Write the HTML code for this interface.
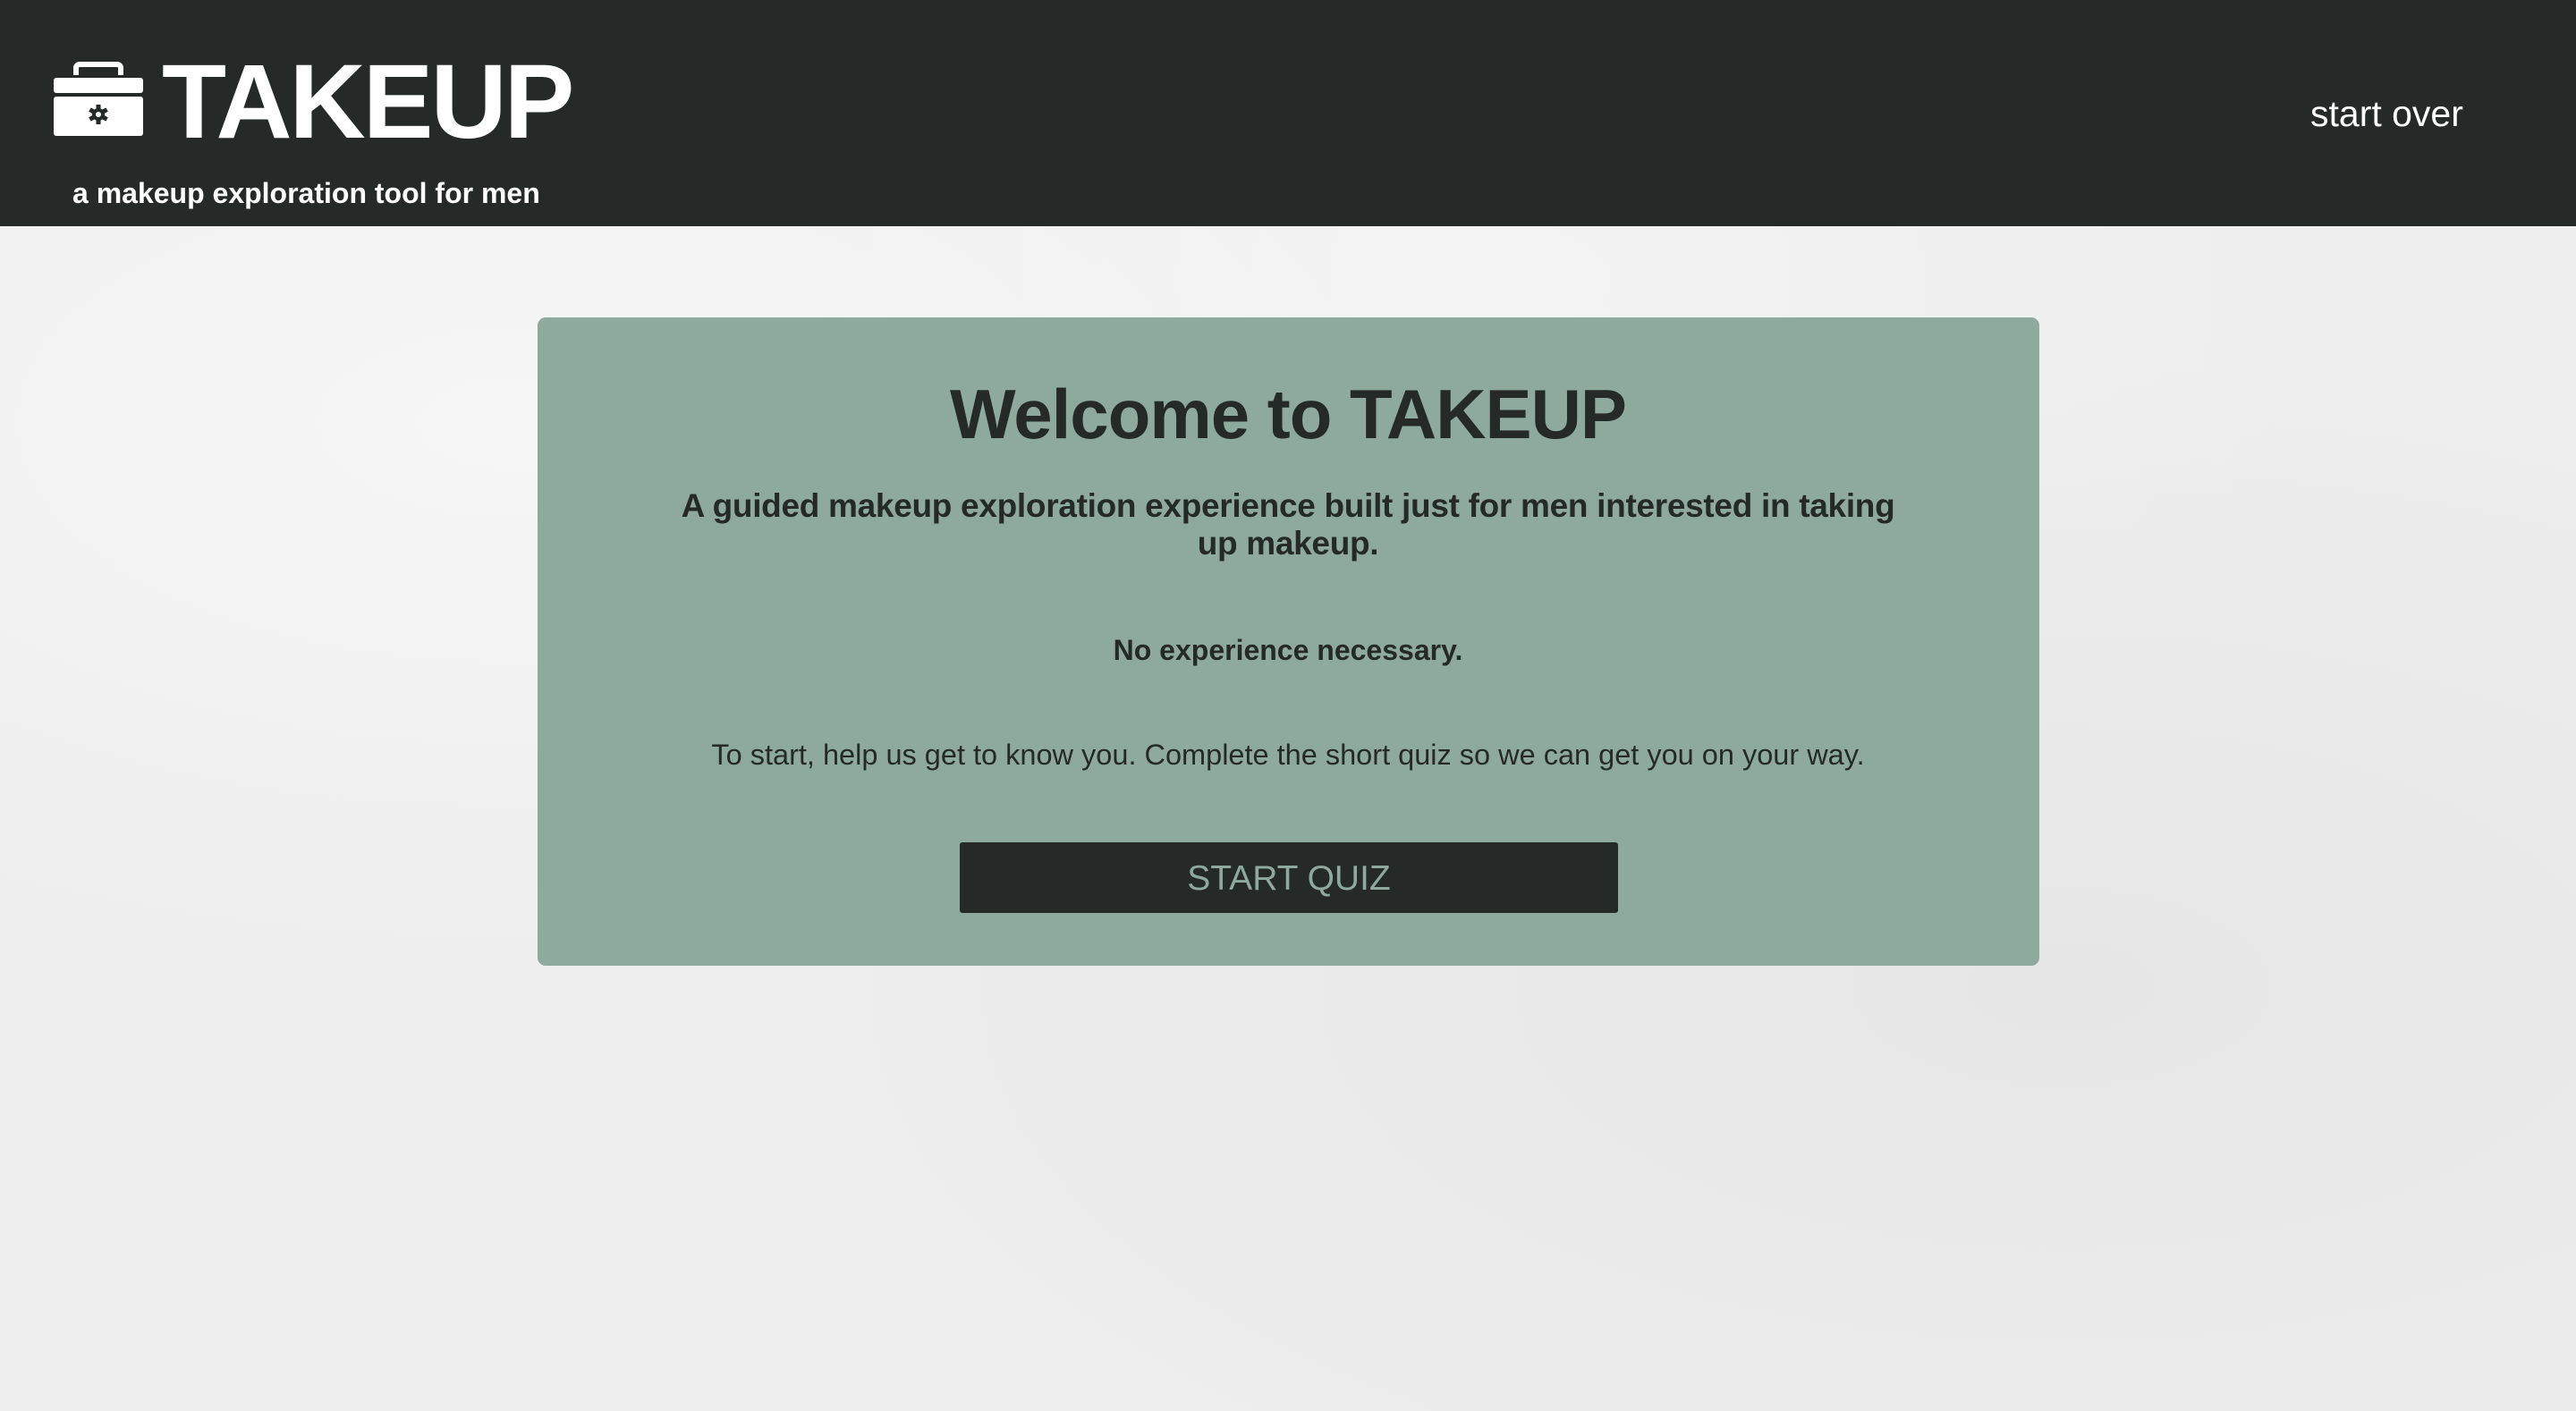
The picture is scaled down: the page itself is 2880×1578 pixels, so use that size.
<!DOCTYPE html>
<html><head><meta charset="utf-8"><style>
html,body{margin:0;padding:0;width:2880px;height:1578px;overflow:hidden;font-family:"Liberation Sans",sans-serif;}
body{background:#eeeeee;background-image:radial-gradient(ellipse at 20% 30%,#f6f6f6 0,transparent 40%),radial-gradient(ellipse at 80% 70%,#e6e6e6 0,transparent 45%),radial-gradient(ellipse at 60% 20%,#f3f3f3 0,transparent 35%);position:relative;}
.hdr{position:absolute;left:0;top:0;width:2880px;height:253px;background:#252a28;}
.logo{position:absolute;left:181px;top:54px;font-size:118px;font-weight:bold;color:#fff;letter-spacing:-3px;line-height:120px;}
.tag{position:absolute;left:81px;top:198px;font-size:32px;font-weight:bold;color:#fff;}
.so{position:absolute;left:2583px;top:104px;font-size:41px;color:#fff;}
.card{position:absolute;left:601px;top:355px;width:1679px;height:725px;background:#8eaa9f;border-radius:9px;}
.h1{position:absolute;left:0;width:100%;top:418px;font-size:78px;font-weight:bold;letter-spacing:-1px;color:#252a28;text-align:center;}
.sub{position:absolute;left:745px;width:1390px;top:545px;font-size:37px;font-weight:bold;line-height:42px;text-align:center;color:#252a28;letter-spacing:-0.3px;}
.ne{position:absolute;left:0;width:100%;top:709px;font-size:32px;font-weight:bold;text-align:center;color:#252a28;}
.p{position:absolute;left:0;width:100%;top:826px;font-size:32.5px;text-align:center;color:#252a28;}
.btn{position:absolute;left:1073px;top:942px;width:736px;height:79px;background:#252a28;border-radius:3px;color:#8eaa9f;font-size:39px;line-height:81px;text-align:center;}
</style></head><body>
<div class="hdr">
<svg style="position:absolute;left:59px;top:68px" width="102" height="85" viewBox="0 0 102 85">
<path d="M26 16 V8 a4 4 0 0 1 4 -4 H72 a4 4 0 0 1 4 4 V16" fill="none" stroke="#fff" stroke-width="6"/>
<rect x="1" y="19" width="100" height="17" rx="3" fill="#fff"/>
<rect x="1" y="40" width="100" height="44" rx="3" fill="#fff"/>
<g transform="translate(51,60)" fill="#252a28">
<circle r="7"/>
<rect x="-2.5" y="-11" width="5" height="22"/>
<rect x="-2.5" y="-11" width="5" height="22" transform="rotate(60)"/>
<rect x="-2.5" y="-11" width="5" height="22" transform="rotate(-60)"/>
<circle r="3" fill="#fff"/>
</g>
</svg>
<div class="logo">TAKEUP</div>
<div class="tag">a makeup exploration tool for men</div>
<div class="so">start over</div>
</div>
<div class="card"></div>
<div class="h1">Welcome to TAKEUP</div>
<div class="sub">A guided makeup exploration experience built just for men interested in taking<br>up makeup.</div>
<div class="ne">No experience necessary.</div>
<div class="p">To start, help us get to know you. Complete the short quiz so we can get you on your way.</div>
<div class="btn">START QUIZ</div>
</body></html>
